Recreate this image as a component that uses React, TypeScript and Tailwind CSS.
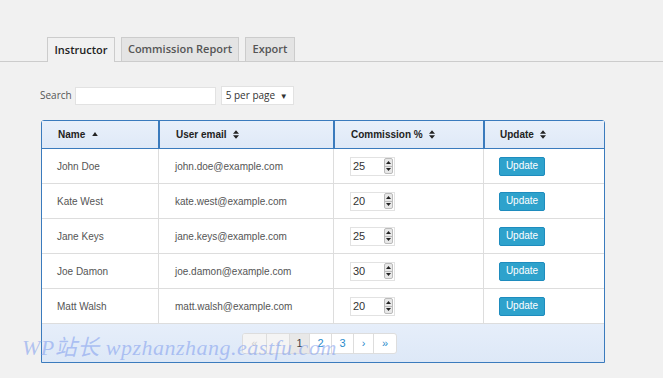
import React from 'react';

const rows = [
  { name: 'John Doe', email: 'john.doe@example.com', pct: 25 },
  { name: 'Kate West', email: 'kate.west@example.com', pct: 20 },
  { name: 'Jane Keys', email: 'jane.keys@example.com', pct: 25 },
  { name: 'Joe Damon', email: 'joe.damon@example.com', pct: 30 },
  { name: 'Matt Walsh', email: 'matt.walsh@example.com', pct: 20 },
];

const SortBoth = () => (
  <svg width="6" height="9" viewBox="0 0 7 10" className="ml-[6px] inline-block">
    <path d="M0 4 L3.5 0 L7 4 Z M0 6 L3.5 10 L7 6 Z" fill="#222" />
  </svg>
);

const SortUp = () => (
  <svg width="6" height="4" viewBox="0 0 7 5" className="ml-[7px] inline-block mb-[2px]">
    <path d="M0 5 L3.5 0 L7 5 Z" fill="#222" />
  </svg>
);

const Spinner = () => (
  <div className="flex flex-col w-[9px] h-[16px] border border-[#bbb] rounded-[2px] bg-[#e8e8e8] ml-auto mr-[1px]">
    <div className="flex-1 flex items-center justify-center border-b border-[#bbb]">
      <svg width="5" height="3" viewBox="0 0 5 3"><path d="M0 3 L2.5 0 L5 3 Z" fill="#222" /></svg>
    </div>
    <div className="flex-1 flex items-center justify-center">
      <svg width="5" height="3" viewBox="0 0 5 3"><path d="M0 0 L2.5 3 L5 0 Z" fill="#222" /></svg>
    </div>
  </div>
);

const App: React.FC = () => {
  const cols = 'grid grid-cols-[116px_175px_150px_121px]';
  return (
    <div className="w-[663px] h-[378px] bg-[#f1f1f1] relative overflow-hidden font-['Liberation_Sans',sans-serif]">
      {/* tabs */}
      <div className="pt-[37px] border-b border-[#ccc] flex pl-[47px] gap-[6px] font-['Open_Sans',sans-serif] text-[11px] font-semibold">
        <div className="h-[25px] w-[68px] border border-[#ccc] border-b-0 bg-[#f1f1f1] text-[#222] flex items-center justify-center -mb-px">Instructor</div>
        <div className="h-[24px] w-[118px] border border-[#ccc] border-b-0 bg-[#e4e4e4] text-[#555] flex items-center justify-center">Commission Report</div>
        <div className="h-[24px] w-[50px] border border-[#ccc] border-b-0 bg-[#e4e4e4] text-[#555] flex items-center justify-center">Export</div>
      </div>

      {/* search row */}
      <div className="flex items-center mt-[24px] ml-[40px] font-['Open_Sans',sans-serif] text-[10px] text-[#555]">
        <span className="mr-[3px]">Search</span>
        <div className="w-[141px] h-[18px] bg-white border border-[#e2e2e2]" />
        <div className="ml-[5px] w-[73px] h-[19px] bg-white border border-[#e2e2e2] flex items-center pl-[4px] pr-[5px] text-[#333] text-[10px] whitespace-nowrap">
          <span>5 per page</span>
          <span className="ml-auto text-[8px]">▼</span>
        </div>
      </div>

      {/* table */}
      <div className="ml-[41px] mt-[15px] w-[564px] border border-[#3b7bbd] rounded-t-[3px] bg-white">
        <div className={`${cols} h-[28px] bg-[linear-gradient(#e9f0fa,#dfe9f7)] border-b border-[#3b7bbd] text-[10px] font-bold text-[#222]`}>
          <div className="flex items-center pl-[16px]">Name<SortUp /></div>
          <div className="flex items-center pl-[16px] border-l-2 border-[#3b7bbd]">User email<SortBoth /></div>
          <div className="flex items-center pl-[16px] border-l-2 border-[#3b7bbd]">Commission %<SortBoth /></div>
          <div className="flex items-center pl-[15px] border-l-2 border-[#3b7bbd]">Update<SortBoth /></div>
        </div>
        {rows.map((r) => (
          <div key={r.name} className={`${cols} h-[35px] border-b border-[#ddd] text-[10px] text-[#555]`}>
            <div className="flex items-center pl-[15px]">{r.name}</div>
            <div className="flex items-center pl-[16px] border-l border-[#ddd]">{r.email}</div>
            <div className="flex items-center pl-[16px] border-l border-[#ddd]">
              <div className="w-[45px] h-[19px] bg-white border border-[#e2e2e2] flex items-center pl-[2px] text-[#333] text-[11px]">
                {r.pct}
                <Spinner />
              </div>
            </div>
            <div className="flex items-center pl-[15px] border-l border-[#ddd]">
              <button className="w-[46px] h-[19px] bg-[#2ea2cc] border border-[#1e8cbe] rounded-[2px] text-white text-[10px] leading-none">Update</button>
            </div>
          </div>
        ))}
        <div className="h-[38px] bg-[linear-gradient(#e6eefa,#dde8f7)] flex items-center pl-[200px]">
          <div className="flex h-[21px] bg-white border border-[#ddd] rounded-[3px] text-[11px] text-[#2a8bcc] overflow-hidden">
            <div className="w-[24px] flex items-center justify-center text-[#ccc] bg-[#f4f4f4] border-r border-[#ddd]">«</div>
            <div className="w-[23px] flex items-center justify-center text-[#ccc] bg-[#f4f4f4] border-r border-[#ddd]">‹</div>
            <div className="w-[20px] flex items-center justify-center text-[#444] bg-[#e8e8e8] border-r border-[#ddd]">1</div>
            <div className="w-[22px] flex items-center justify-center border-r border-[#ddd]">2</div>
            <div className="w-[22px] flex items-center justify-center border-r border-[#ddd]">3</div>
            <div className="w-[20px] flex items-center justify-center border-r border-[#ddd]">›</div>
            <div className="w-[22px] flex items-center justify-center">»</div>
          </div>
        </div>
      </div>

      {/* watermark */}
      <div className="absolute left-[22px] top-[331px] text-[22px] italic text-[#86a2ee]/60 font-['Liberation_Serif','Noto_Sans_CJK_SC',serif] whitespace-nowrap pointer-events-none tracking-[0.5px]">
        WP站长 wpzhanzhang.eastfu.com
      </div>
    </div>
  );
};

export default App;
